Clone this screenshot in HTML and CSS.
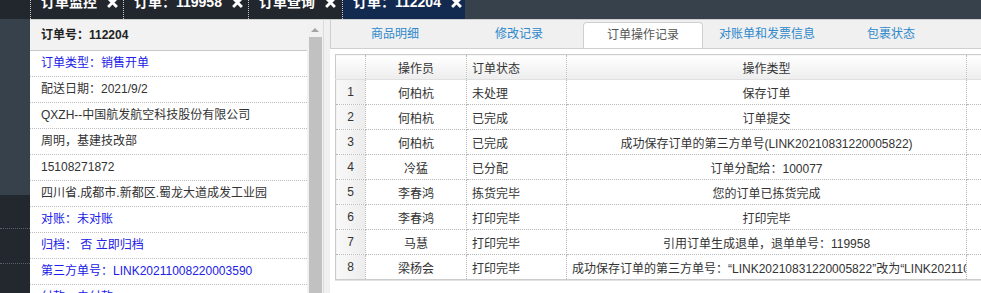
FILE: index.html
```html
<!DOCTYPE html>
<html lang="zh-CN">
<head>
    <meta charset="UTF-8">
    <title>订单：112204</title>
    <link rel="stylesheet" href="styles.css">
</head>
<body>
    <div class="app">
        <div class="side">
            <div class="side-top"></div>
            <div class="side-menu"></div>
            <div class="side-list">
                <div class="side-item"></div>
                <div class="side-item"></div>
            </div>
        </div>

        <div class="main">
            <div class="tabbar">
                <div class="tab tab-w1"><span class="tab-text">订单监控</span><svg class="close" viewBox="0 0 10 10"><path d="M1 1L9 9M9 1L1 9"/></svg></div>
                <div class="tab tab-w2"><span class="tab-text">订单：119958</span><svg class="close" viewBox="0 0 10 10"><path d="M1 1L9 9M9 1L1 9"/></svg></div>
                <div class="tab tab-w3"><span class="tab-text">订单查询</span><svg class="close" viewBox="0 0 10 10"><path d="M1 1L9 9M9 1L1 9"/></svg></div>
                <div class="tab tab-w4 active"><span class="tab-text">订单：112204</span><svg class="close" viewBox="0 0 10 10"><path d="M1 1L9 9M9 1L1 9"/></svg></div>
            </div>

            <div class="content">
                <div class="info">
                    <div class="info-head">订单号：112204</div>
                    <div class="info-row blue">订单类型：销售开单</div>
                    <div class="info-row">配送日期：2021/9/2</div>
                    <div class="info-row">QXZH--中国航发航空科技股份有限公司</div>
                    <div class="info-row">周明，基建技改部</div>
                    <div class="info-row">15108271872</div>
                    <div class="info-row">四川省.成都市.新都区.蜀龙大道成发工业园</div>
                    <div class="info-row blue">对账：未对账</div>
                    <div class="info-row blue">归档：&nbsp;否 立即归档</div>
                    <div class="info-row blue">第三方单号：LINK20211008220003590</div>
                    <div class="info-row blue">付款：未付款</div>
                </div>

                <div class="scroll">
                    <div class="scroll-up"></div>
                    <div class="scroll-thumb"></div>
                </div>
                <div class="gutter"></div>

                <div class="detail">
                    <div class="subtabs">
                        <div class="subtab">商品明细</div>
                        <div class="subtab">修改记录</div>
                        <div class="subtab current">订单操作记录</div>
                        <div class="subtab">对账单和发票信息</div>
                        <div class="subtab">包裹状态</div>
                    </div>

                    <table class="grid">
                        <colgroup>
                            <col class="c-num">
                            <col class="c-user">
                            <col class="c-state">
                            <col class="c-type">
                            <col class="c-more">
                        </colgroup>
                        <thead>
                            <tr>
                                <th></th>
                                <th>操作员</th>
                                <th class="left">订单状态</th>
                                <th>操作类型</th>
                                <th></th>
                            </tr>
                        </thead>
                        <tbody>
                            <tr><td class="num">1</td><td>何柏杭</td><td class="left">未处理</td><td>保存订单</td><td></td></tr>
                            <tr><td class="num">2</td><td>何柏杭</td><td class="left">已完成</td><td>订单提交</td><td></td></tr>
                            <tr><td class="num">3</td><td>何柏杭</td><td class="left">已完成</td><td>成功保存订单的第三方单号(LINK20210831220005822)</td><td></td></tr>
                            <tr><td class="num">4</td><td>冷猛</td><td class="left">已分配</td><td>订单分配给：100077</td><td></td></tr>
                            <tr><td class="num">5</td><td>李春鸿</td><td class="left">拣货完毕</td><td>您的订单已拣货完成</td><td></td></tr>
                            <tr><td class="num">6</td><td>李春鸿</td><td class="left">打印完毕</td><td>打印完毕</td><td></td></tr>
                            <tr><td class="num">7</td><td>马慧</td><td class="left">打印完毕</td><td>引用订单生成退单，退单单号：119958</td><td></td></tr>
                            <tr><td class="num">8</td><td>梁杨会</td><td class="left">打印完毕</td><td>成功保存订单的第三方单号：“LINK20210831220005822”改为“LINK20211008220003590”</td><td></td></tr>
                        </tbody>
                    </table>
                </div>
            </div>
        </div>
    </div>
</body>
</html>
```

FILE: styles.css
```css
body {
    margin: 0;
    width: 981px;
    height: 293px;
    overflow: hidden;
    background: #22262d;
    font-family: 'Liberation Sans', 'Noto Sans CJK SC', sans-serif;
    font-size: 12px;
    color: #333;
}
.app {
    display: flex;
    height: 293px;
}
.side {
    width: 30px;
    display: flex;
    flex-direction: column;
}
.side-top {
    height: 19px;
    background: #22262d;
}
.side-menu {
    height: 176px;
    background: #36414b;
}
.side-list {
    flex: 1;
    background: #23272e;
}
.side-item {
    height: 33px;
    border-bottom: 1px dotted #59606a;
}
.side-item + .side-item {
    height: 34px;
}
.main {
    flex: 1;
    display: flex;
    flex-direction: column;
    min-width: 0;
}
.tabbar {
    height: 19px;
    display: flex;
    background: #36414b;
    overflow: hidden;
}
.tab {
    box-sizing: border-box;
    height: 19px;
    display: flex;
    align-items: flex-start;
    gap: 10px;
    padding-left: 10px;
    background: #22262d;
    border-left: 1px dotted #c8c8c8;
    color: #fff;
    font-size: 14px;
    font-weight: bold;
    line-height: 14px;
    overflow: hidden;
}
.tab.active {
    background: #132a50;
}
.tab-w1 { width: 93px; }
.tab-w2 { width: 125px; }
.tab-w3 { width: 94px; }
.tab-w4 { width: 123px; }
.tab-text {
    margin-top: -5px;
    white-space: nowrap;
}
.close {
    width: 11px;
    height: 11px;
    margin-top: -3px;
    flex: none;
    fill: none;
    stroke: #fff;
    stroke-width: 2.6;
}
.content {
    flex: 1;
    display: flex;
    min-height: 0;
}
.info {
    width: 277px;
    background: #fff;
    border-top: 1px solid #d0d0d0;
    overflow: hidden;
}
.info-head {
    box-sizing: border-box;
    height: 31px;
    line-height: 30px;
    padding-left: 11px;
    background: #f2f2f2;
    border-bottom: 1px solid #c8c8c8;
    font-weight: bold;
    color: #222;
}
.info-row {
    box-sizing: border-box;
    height: 26px;
    line-height: 25px;
    padding-left: 11px;
    border-bottom: 1px dotted #bdbdbd;
    white-space: nowrap;
}
.info-row.blue {
    color: #2020e6;
}
.scroll {
    width: 16px;
    background: #f1f1f1;
    border-top: 1px solid #d0d0d0;
}
.scroll-up {
    width: 0;
    height: 0;
    margin: 8px 0 0 4px;
    border-left: 4px solid transparent;
    border-right: 4px solid transparent;
    border-bottom: 4px solid #a3a3a3;
}
.scroll-thumb {
    height: 260px;
    margin: 5px 1px 0 2px;
    background: #c1c1c1;
}
.gutter {
    width: 6px;
    background: #f0f0f0;
    border-left: 1px solid #dcdcdc;
    border-top: 1px solid #d0d0d0;
}
.detail {
    flex: 1;
    min-width: 0;
    background: #fff;
    overflow: hidden;
}
.subtabs {
    box-sizing: border-box;
    height: 30px;
    display: flex;
    align-items: flex-end;
    gap: 4px;
    padding-left: 4px;
    background: #f0f0f0;
    border: 1px solid #cfcfcf;
    border-right: none;
}
.subtab {
    box-sizing: border-box;
    width: 120px;
    height: 26px;
    line-height: 24px;
    text-align: center;
    color: #2e88cc;
    white-space: nowrap;
}
.subtab.current {
    background: #fff;
    color: #555;
    border: 1px solid #cfcfcf;
    border-bottom: none;
    border-radius: 4px 4px 0 0;
}
.grid {
    margin: 5px 0 0 5px;
    width: 760px;
    table-layout: fixed;
    border-collapse: collapse;
    border: 1px solid #cccccc;
    box-shadow: 0 1px 0 #e2e2e2;
}
.c-num { width: 30px; }
.c-user { width: 101px; }
.c-state { width: 100px; }
.c-type { width: 400px; }
.c-more { width: 129px; }
.grid th,
.grid td {
    height: 24px;
    padding: 0 5px;
    border-right: 1px dotted #b8b8b8;
    border-bottom: 1px dotted #b8b8b8;
    text-align: center;
    white-space: nowrap;
    overflow: hidden;
    font-weight: normal;
    color: #333;
}
.grid th {
    background: linear-gradient(#ffffff, #ededed);
    border-bottom: 1px solid #e0e0e0;
}
.grid tbody tr:last-child td {
    border-bottom: 1px solid #cccccc;
}
.grid .left {
    text-align: left;
}
.grid .num {
    background: linear-gradient(90deg, #f9f9f9, #ececec);
}
```
